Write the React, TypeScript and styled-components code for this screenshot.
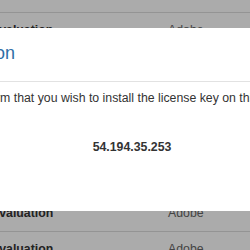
import styled, { createGlobalStyle } from 'styled-components';

const GlobalStyle = createGlobalStyle`
  html, body {
    margin: 0;
    padding: 0;
    background: #ffffff;
    overflow: hidden;
  }

  body {
    font-family: "Liberation Sans", Arial, sans-serif;
    font-size: 12.3px;
    color: #333333;
  }
`

interface License {
  type: string;
  vendor: string;
}

const licenses: License[] = Array.from({ length: 8 }, () => ({
  type: 'Evaluation',
  vendor: 'Adobe',
}));

export default function App() {
  return (
    <>
      <GlobalStyle />
      <Table>
        {licenses.map((license, i) => (
          <Row key={i}>
            <TypeCell>{license.type}</TypeCell>
            <VendorCell>{license.vendor}</VendorCell>
          </Row>
        ))}
      </Table>

      <Backdrop />

      <Modal role="dialog" aria-labelledby="install-title">
        <Header>
          <Title id="install-title">Installation</Title>
        </Header>
        <Body>
          <Message>Please confirm that you wish to install the license key on this server:</Message>
          <Address>54.194.35.253</Address>
        </Body>
      </Modal>
    </>
  )
}

const Table = styled.div`
  display: flex;
  flex-direction: column;
  margin: 12px 0 0 -17px;
`

const Row = styled.div`
  display: grid;
  grid-template-columns: 177px 1fr;
  border-top: 1px solid #dddddd;
  line-height: 17px;
`

const TypeCell = styled.div`
  padding: 9.25px 8px;
  font-weight: 700;
  color: #333333;
`

const VendorCell = styled.div`
  padding: 9.25px 8px;
  color: #666666;
`

const Backdrop = styled.div`
  position: fixed;
  inset: 0;
  background: rgba(0, 0, 0, 0.33);
`

const Modal = styled.div`
  position: fixed;
  top: 28px;
  left: -86px;
  width: 436px;
  background: #ffffff;
`

const Header = styled.div`
  padding: 15px 15px 18px;
  border-bottom: 1px solid #e2e2e2;
`

const Title = styled.h4`
  margin: 0;
  font-size: 18px;
  font-weight: 400;
  line-height: 20px;
  color: #2e6ea6;
`

const Body = styled.div`
  padding: 8px 15px 55px;
  line-height: 17px;
`

const Message = styled.p`
  margin: 0 0 32px;
  white-space: nowrap;
`

const Address = styled.p`
  margin: 0;
  text-align: center;
  font-weight: 700;
`
